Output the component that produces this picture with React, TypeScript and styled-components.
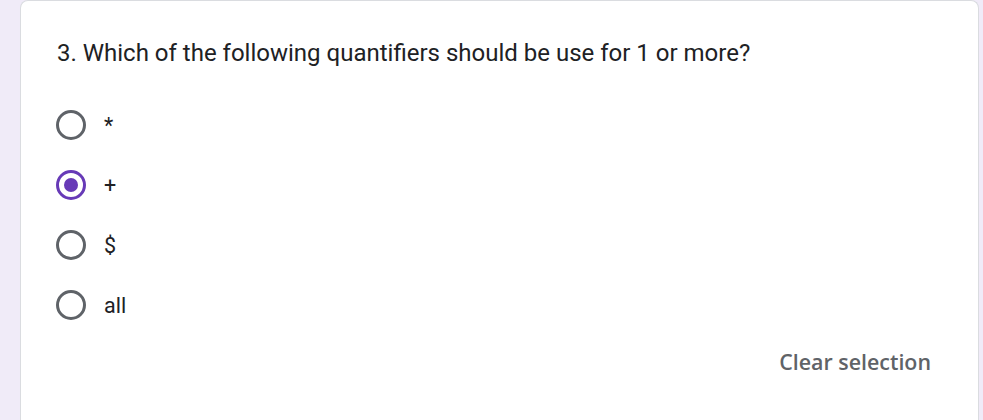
import React, { useState } from "react";
import styled, { createGlobalStyle } from "styled-components";

const Global = createGlobalStyle`
  html, body { margin: 0; padding: 0; background: #f0ebf8; overflow: hidden; }
  body { font-family: Roboto, "Liberation Sans", Arial, sans-serif; }
`;

const Page = styled.div`
  padding: 0 4px 0 20px;
  height: 420px;
  box-sizing: border-box;
`;

const Card = styled.div`
  background: #fff;
  border: 1px solid #dadce0;
  border-bottom: none;
  border-radius: 8px 8px 0 0;
  height: 440px;
  box-sizing: border-box;
  padding: 34px 36px 0 35px;
  display: flex;
  flex-direction: column;
`;

const Title = styled.div`
  font-size: 24px;
  line-height: 36px;
  color: #202124;
  padding-left: 1px;
  margin-bottom: 24px;
`;

const Options = styled.div`
  display: flex;
  flex-direction: column;
`;

const Row = styled.label`
  display: flex;
  align-items: center;
  height: 60px;
  gap: 18px;
  cursor: pointer;
`;

const Radio = styled.span<{ $checked: boolean }>`
  width: 30px;
  height: 30px;
  box-sizing: border-box;
  border-radius: 50%;
  border: 3px solid ${(p) => (p.$checked ? "#673ab7" : "#5f6368")};
  display: flex;
  align-items: center;
  justify-content: center;
  flex-shrink: 0;
  &::after {
    content: "";
    width: 14px;
    height: 14px;
    border-radius: 50%;
    background: #673ab7;
    display: ${(p) => (p.$checked ? "block" : "none")};
  }
`;

const OptionText = styled.span`
  font-size: 21.5px;
  color: #202124;
`;

const Footer = styled.div`
  display: flex;
  justify-content: flex-end;
  margin-top: 12px;
  padding-right: 11px;
`;

const ClearButton = styled.button`
  background: none;
  border: none;
  padding: 0;
  font-family: "Open Sans", Roboto, sans-serif;
  font-weight: 600;
  font-size: 21.4px;
  color: #5f6368;
  cursor: pointer;
`;

const options = ["*", "+", "$", "all"];

export default function App() {
  const [sel, setSel] = useState<number | null>(1);
  return (
    <Page>
      <Global />
      <Card>
        <Title>3. Which of the following quantifiers should be use for 1 or more?</Title>
        <Options>
          {options.map((o, i) => (
            <Row key={o} onClick={() => setSel(i)}>
              <Radio $checked={sel === i} />
              <OptionText>{o}</OptionText>
            </Row>
          ))}
        </Options>
        <Footer>
          <ClearButton onClick={() => setSel(null)}>Clear selection</ClearButton>
        </Footer>
      </Card>
    </Page>
  );
}
